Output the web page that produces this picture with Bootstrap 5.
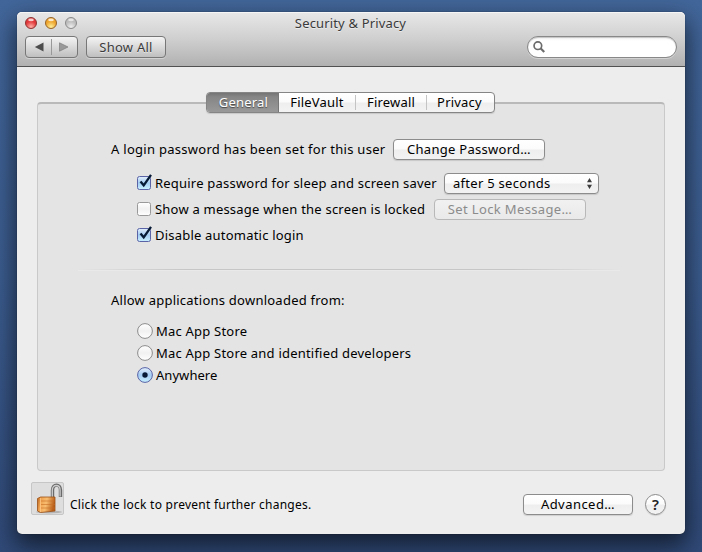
<!DOCTYPE html>
<html lang="en">
<head>
<meta charset="utf-8">
<meta name="viewport" content="width=device-width, initial-scale=1">
<title>Security &amp; Privacy</title>
<link href="https://cdn.jsdelivr.net/npm/bootstrap@5.3.0/dist/css/bootstrap.min.css" rel="stylesheet">
<style>
html,body{height:100%;overflow:hidden}
body{background:linear-gradient(#42669a,#3b5c8f 50%,#304a78);padding:12px 17px 18px;font-family:"Noto Sans","Open Sans",sans-serif;font-size:13px;line-height:18px;letter-spacing:.21px;color:#000}
.win{background:#ededed;border-radius:5px;box-shadow:0 0 1px rgba(0,0,0,.7),0 10px 24px 2px rgba(0,0,0,.6)}
.titlebar{height:55px;padding:0 8px;background:linear-gradient(#e8e8e8,#cfcfcf 50%,#b1b1b1);border-bottom:1px solid #515151;border-radius:5px 5px 0 0;box-shadow:inset 0 1px #f6f6f6}
.title-row{height:24px;padding-top:4px;color:#3a3a3a}
.lights{width:60px;gap:8px;padding-top:1px}
.title-row .name{text-shadow:0 1px rgba(255,255,255,.5);line-height:15px;letter-spacing:.16px;padding-right:1px}
.mac{height:21px;padding:0 0 1px;font-size:13px;line-height:17px;letter-spacing:.28px;color:#000;border:1px solid #8c8c8c;border-radius:4px;background:linear-gradient(#fff,#fbfbfb 48%,#eee 52%,#f3f3f3);box-shadow:0 1px 1px rgba(0,0,0,.13)}
.mac:hover{color:#000}
.mac:disabled{color:#8b8b8b;letter-spacing:.36px;border-color:#b8b8b8;background:linear-gradient(#f1f1f1,#e9e9e9);opacity:1;box-shadow:none}
.tool{height:22px;padding:0;line-height:19px;font-size:13px;letter-spacing:.25px;color:#3b3b3b;border:1px solid #777;border-radius:4px;background:linear-gradient(#f4f4f4,#bfbfbf);box-shadow:0 1px rgba(255,255,255,.35);text-shadow:0 1px rgba(255,255,255,.5)}
.nav-pair{width:53px}
.nav-pair i{width:1px;height:16px;background:#999}
.show-all{width:80px}
.search{width:150px;height:22px;border:1px solid #888;border-radius:11px;background:linear-gradient(#f2f2f2,#fff 4px,#fff);box-shadow:0 1px rgba(255,255,255,.35),inset 0 1px 1px rgba(0,0,0,.2);padding-left:5px}
.search input{height:18px;min-height:0;font-size:12px}
.pane{margin:35px 20px 0;height:369px;border:1px solid #c9c9c9;border-top:2px solid #b9b9b9;border-radius:4px;background:#e4e4e4}
.tabs{width:289px;height:21px;margin:-12px auto 0;position:relative;left:-.5px;border:1px solid #858585;border-radius:4px;background:linear-gradient(#fff,#fbfbfb 48%,#eee 52%,#f3f3f3);box-shadow:0 1px 1px rgba(0,0,0,.13)}
.tabs button{border:0;padding:0;background:none;font-size:13px;line-height:19px;height:19px;letter-spacing:.2px;color:#000}
.tabs .active{width:72px;height:19px;background:linear-gradient(#747474,#858585 20%,#999);color:#fff;text-shadow:0 1px 1px #444;border-radius:3px 0 0 3px;border-right:1px solid #777;padding-left:2px}
.tabs i{width:1px;height:15px;background:#c4c4c4}
.content-area{padding:26px 0 0 73px}
.content-area .indent{padding-left:26px}
.line{height:21px}
.line > span{margin-top:-2px}
.line + .line{margin-top:5px}
.tick,.dot{flex:none;overflow:visible}
.tick{margin-top:-2px}
.rule{height:1px;margin:23px 44px 0 -33px;background:linear-gradient(90deg,transparent,#c6c6c6 20%,#c6c6c6 80%,transparent);box-shadow:0 1px rgba(255,255,255,.2)}
.radio-line{height:22px}
.foot{padding:11px 19px 0 14px;height:44px}
.lock{width:33px;height:33px;border:1px solid #c6c6c6;border-radius:2px;background:#dedede}
.hint{font-size:12px;padding-top:14px;letter-spacing:.25px}
.help{width:21px;height:21px;border-radius:50%;font-size:15px;font-weight:600;color:#222;letter-spacing:0}
</style>
</head>
<body>
<main class="win h-100">
  <header class="titlebar">
    <div class="title-row d-flex">
      <div class="lights d-flex">
        <svg width="12" height="12" viewBox="0 0 12 12"><defs>
          <radialGradient id="r" cy=".85"><stop stop-color="#ffb0a8"/><stop offset="1" stop-color="#e23a3c"/></radialGradient>
          <radialGradient id="y" cy=".85"><stop stop-color="#fff09a"/><stop offset="1" stop-color="#eea62f"/></radialGradient>
          <radialGradient id="g" cy=".85"><stop stop-color="#eee"/><stop offset="1" stop-color="#bdbdbd"/></radialGradient></defs>
          <circle cx="6" cy="6" r="5.5" fill="url(#r)" stroke="#8c3634"/><ellipse cx="6" cy="2.9" rx="2.8" ry="1.4" fill="#fff" opacity=".75"/></svg>
        <svg width="12" height="12" viewBox="0 0 12 12"><circle cx="6" cy="6" r="5.5" fill="url(#y)" stroke="#95632a"/><ellipse cx="6" cy="2.9" rx="2.8" ry="1.4" fill="#fff" opacity=".75"/></svg>
        <svg width="12" height="12" viewBox="0 0 12 12"><circle cx="6" cy="6" r="5.5" fill="url(#g)" stroke="#8b8b8b"/><ellipse cx="6" cy="2.9" rx="2.8" ry="1.4" fill="#fff" opacity=".6"/></svg>
      </div>
      <div class="name flex-grow-1 text-center">Security &amp; Privacy</div>
      <div class="lights"></div>
    </div>
    <div class="d-flex">
      <div class="tool nav-pair d-flex align-items-center justify-content-between">
        <svg class="ms-2" width="10" height="10"><path d="M9.5.5v9L.8 5z" fill="#4c4c4c"/></svg>
        <i></i>
        <svg class="me-2" width="10" height="10"><path d="M.5.8v8.4L9 5z" fill="#999" stroke="#7e7e7e" stroke-width=".7"/></svg>
      </div>
      <button class="btn tool show-all ms-2">Show All</button>
      <div class="search d-flex align-items-center ms-auto">
        <svg width="14" height="14" viewBox="0 0 14 14" fill="none" stroke="#6c6c6c"><circle cx="5.5" cy="5.5" r="4.3" stroke-width="1.9"/><path d="M8.500 8.500l4.200 4.200" stroke-width="2.500"/></svg>
        <input class="form-control border-0 bg-transparent shadow-none p-0 ms-1" aria-label="Search">
      </div>
    </div>
  </header>

  <section class="pane">
    <div class="tabs d-flex align-items-center">
      <button class="active">General</button>
      <button style="width:76px">FileVault</button><i></i>
      <button style="width:70px">Firewall</button><i></i>
      <button class="flex-grow-1" style="padding-right:2px">Privacy</button>
    </div>
    <div class="content-area">
      <div class="line d-flex align-items-center"><span style="width:282px;letter-spacing:.28px">A login password has been set for this user</span><button class="btn mac" style="width:152px">Change Password…</button></div>
      <div class="indent" style="padding-top:13px">
        <div class="line d-flex align-items-center">
          <svg class="tick" width="14" height="14" viewBox="0 0 14 14"><defs>
            <linearGradient id="b" x2="0" y2="1"><stop stop-color="#e3effb"/><stop offset=".5" stop-color="#a3ccf3"/><stop offset="1" stop-color="#c9f1ff"/></linearGradient>
            <linearGradient id="w" x2="0" y2="1"><stop stop-color="#fff"/><stop offset=".5" stop-color="#f1f1f1"/><stop offset="1" stop-color="#fff"/></linearGradient></defs>
            <rect x=".5" y=".5" width="13" height="13" rx="2" fill="url(#b)" stroke="#5a63a6"/><path d="M3.500 5.500l3.200 3.800L14-1.200" fill="none" stroke="#071a35" stroke-width="2.300"/></svg>
          <span style="width:293px;padding-left:4px">Require password for sleep and screen saver</span>
          <button class="btn mac d-flex align-items-center justify-content-between ps-2" style="width:155px;padding-right:6px"><span>after 5 seconds</span><svg width="5" height="11" fill="#3d3d3d"><path d="M2.5 0L5 4.3H0zM0 6.7h5L2.5 11z"/></svg></button>
        </div>
        <div class="line d-flex align-items-center">
          <svg class="tick" width="14" height="14" viewBox="0 0 14 14"><rect x=".5" y=".5" width="13" height="13" rx="2" fill="url(#w)" stroke="#999"/></svg>
          <span style="width:283px;padding-left:4px">Show a message when the screen is locked</span>
          <button class="btn mac" style="width:152px" disabled>Set Lock Message…</button>
        </div>
        <div class="line d-flex align-items-center">
          <svg class="tick" width="14" height="14" viewBox="0 0 14 14"><rect x=".5" y=".5" width="13" height="13" rx="2" fill="url(#b)" stroke="#5a63a6"/><path d="M3.500 5.500l3.200 3.800L14-1.200" fill="none" stroke="#071a35" stroke-width="2.300"/></svg>
          <span style="padding-left:4px">Disable automatic login</span>
        </div>
      </div>
      <div class="rule"></div>
      <div style="padding-top:21px;letter-spacing:.24px">Allow applications downloaded from:</div>
      <div class="indent" style="padding-top:11px">
        <div class="radio-line d-flex align-items-center"><svg class="dot" width="16" height="16"><circle cx="8" cy="8" r="7.4" fill="url(#w)" stroke="#8c8c8c"/></svg><span style="padding-left:3px">Mac App Store</span></div>
        <div class="radio-line d-flex align-items-center"><svg class="dot" width="16" height="16"><circle cx="8" cy="8" r="7.4" fill="url(#w)" stroke="#8c8c8c"/></svg><span style="padding-left:3px">Mac App Store and identified developers</span></div>
        <div class="radio-line d-flex align-items-center"><svg class="dot" width="16" height="16"><circle cx="8" cy="8" r="7.4" fill="url(#b)" stroke="#5a63a6"/><circle cx="8" cy="8" r="2.7" fill="#071a35"/></svg><span style="padding-left:3px;letter-spacing:.05px">Anywhere</span></div>
      </div>
    </div>
  </section>

  <footer class="foot d-flex">
    <div class="lock"><svg width="31" height="31" viewBox="0 0 31 31"><defs><linearGradient id="o" x2="1" y2=".2"><stop stop-color="#b9641c"/><stop offset=".25" stop-color="#f0a552"/><stop offset=".55" stop-color="#f8bd70"/><stop offset="1" stop-color="#b9601b"/></linearGradient></defs>
      <ellipse cx="17" cy="29" rx="13" ry="1.4" fill="#b4b4b4"/>
      <path d="M20.5 16V7c0-6.5 8-6.5 8 0v7" fill="none" stroke="#6a6a6a" stroke-width="3.4"/><path d="M20.3 16V7c0-6 7.8-6 7.8 0v6.5" fill="none" stroke="#ccc" stroke-width="1.3"/>
      <path d="M5.5 15.5l3-1.5h14.500v14l-14.500 1.500-3-1.500z" fill="url(#o)" stroke="#9c5118" stroke-width=".8"/><path d="M8.500 15v14" stroke="#ffc889" stroke-width=".8"/><path d="M9 18h14M9 21.500h14M9 25h14" stroke="#c66d25" stroke-width=".6"/></svg></div>
    <div class="hint" style="padding-left:6px">Click the lock to prevent further changes.</div>
    <button class="btn mac ms-auto" style="width:110px;margin-top:12px;letter-spacing:.45px">Advanced…</button>
    <button class="btn mac help" style="margin:12px 0 0 12px">?</button>
  </footer>
</main>
<script src="https://cdn.jsdelivr.net/npm/bootstrap@5.3.0/dist/js/bootstrap.bundle.min.js"></script>
</body>
</html>
